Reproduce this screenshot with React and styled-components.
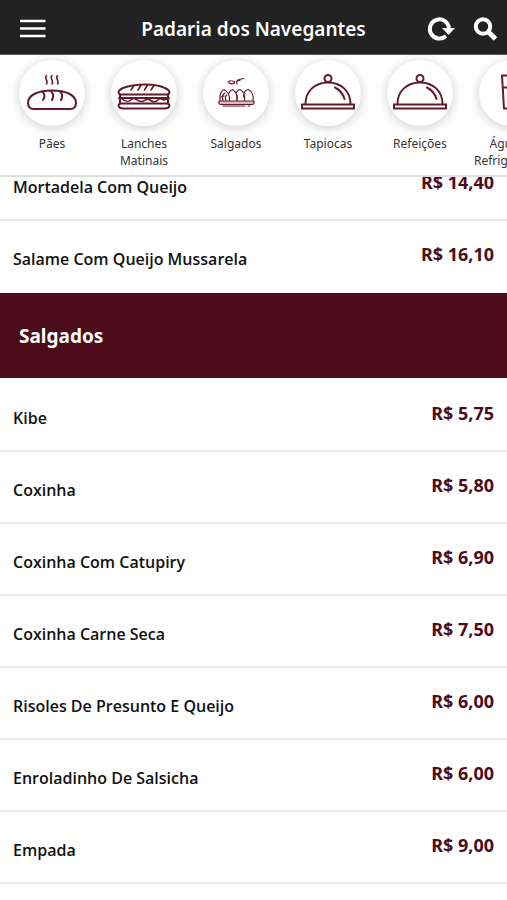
import React from "react";
import styled, { createGlobalStyle } from "styled-components";

const wine = "#4d0c19";

const GlobalStyle = createGlobalStyle`
  * { box-sizing: border-box; }
  html, body, #root { height: 100%; }
  body {
    margin: 0;
    background: #fff;
    color: #111;
    font-family: "Noto Sans", "Open Sans", sans-serif;
  }
`;

const Page = styled.div`
  height: 100%;
  display: flex;
  flex-direction: column;
  overflow: hidden;
`;

const TopBar = styled.header`
  flex: none;
  display: grid;
  grid-template-columns: 80px 1fr 80px;
  align-items: center;
  height: 55px;
  padding-top: 4px;
  background: #222;
  border-bottom: 1px solid #555;
`;

const Title = styled.h1`
  margin: 0;
  color: #fff;
  font-size: 19px;
  line-height: 28px;
  font-weight: 600;
  text-align: center;
  white-space: nowrap;
`;

const Actions = styled.div`
  display: flex;
  justify-content: flex-end;
  gap: 18px;
  padding-right: 9px;
`;

const IconButton = styled.button`
  display: flex;
  justify-self: start;
  margin: 0;
  margin-left: ${(p) => (p.$edge ? "20px" : "0")};
  padding: 0;
  border: 0;
  background: none;
  color: #fff;
  cursor: pointer;
`;

const Categories = styled.nav`
  flex: none;
  display: flex;
  height: 122px;
  padding: 5px 6px 0;
  overflow: hidden;
  border-bottom: 2px solid #ddd;
`;

const Category = styled.a`
  flex: none;
  display: flex;
  flex-direction: column;
  align-items: center;
  gap: 9px;
  width: 92px;
  color: #333;
  font-size: 12px;
  line-height: 17px;
  text-align: center;
  text-decoration: none;
`;

const Disc = styled.span`
  display: block;
  width: 66px;
  height: 66px;
  border-radius: 50%;
  background: #fff;
  box-shadow: 0 2px 12px rgba(0, 0, 0, 0.2);
`;

const Label = styled.span`
  width: 76px;
`;

const Menu = styled.main`
  flex: 1;
  min-height: 0;
  overflow: hidden;
`;

const Products = styled.ul`
  margin: 0;
  margin-top: ${(p) => (p.$scrolled ? "-28px" : "2px")};
  padding: 0;
  list-style: none;
`;

const Product = styled.li`
  display: flex;
  justify-content: space-between;
  height: 72px;
  padding: 0 13px;
  border-bottom: ${(p) => (p.$last ? "0" : "2px solid #e9e9e9")};
`;

const Name = styled.span`
  padding-top: 26px;
  font-size: 16px;
  line-height: 24px;
  font-weight: 600;
  font-family: "Open Sans", sans-serif;
`;

const Price = styled.span`
  padding-top: 21px;
  color: ${wine};
  font-size: 18px;
  line-height: 24px;
  font-weight: 700;
`;

const Section = styled.h2`
  margin: 0;
  padding: 29px 19px 28px;
  background: ${wine};
  color: #fff;
  font-size: 19px;
  line-height: 28px;
  font-weight: 700;
`;

const Drawing = ({ children, width = 2 }) => (
  <svg width="66" height="66" viewBox="0 0 66 66" fill="none" stroke="#641a2b"
    strokeWidth={width} strokeLinecap="round" strokeLinejoin="round" aria-hidden="true">
    {children}
  </svg>
);

const Bread = () => (
  <Drawing>
    <path d="M15 49C11 49 9 47 9 43C9 35 19 30.500 33 30.500S57 35 57 43C57 47 55 49 51 49Z" />
    <path d="M23.500 32C26 34 26 37 24 40M32 31C35 34 34.500 37 33 40M41 31.500C44 34 43.500 37 42 40" />
    <path strokeWidth="1.500" d="M27.500 15.500C24.500 18 30 21 27.500 24M33 15.500C30 18 35.500 21 33 24M38.500 15.500C35.500 18 41 21 38.500 24" />
  </Drawing>
);

const Sandwich = () => (
  <Drawing>
    <path d="M10 34.500C6 34 7 30 12 28C20 25 26 24.500 34 24.500S48 25 54 28C59 30 60 34 56 34.500Z" />
    <path d="M9 34.500V38M57 34.500V38M8 38H58M9 38V43M57 38V43M10 43.500H56C60 43.500 59 48.500 54 48.500H12C7 48.500 6 43.500 10 43.500Z" />
    <path strokeWidth="1.600" d="M10 38C15 43 18 42 21 39C24 36.500 26 42 31 41.500C35 41 35 37 39 40C43 43 45 42 48 39C51 37 52 43 57 38M20 30L23 25.500M27 30L30 25M33.500 30L36.500 25M40 30L43 25.500" />
  </Drawing>
);

const Snacks = () => (
  <Drawing width={1.2}>
    <path fill="#d9b9c0" d="M16 41H51V43C51 44 50 44.500 49 44.500H18C17 44.500 16 44 16 43Z" />
    <path d="M20 46H42M45 46H47" />
    <path d="M17 40.500C16 34 19 30 21 29.500C24 31 27 35 26.500 40.500M26 33C27 31 28 30 29.500 29.500C32 31 35 35 34 40.500M33 33C34 31 35.500 29.500 37 29.500C40 31 42.500 35 41.500 40.500M40.500 37C40.500 33 42.500 30 45 29.500C49 31 51 36 50 40.500" />
    <path d="M20 40.500C19 37 20 34 22 33M23 40.500C22 38 22 36 24 35M18 37L21 36M34 35V40" />
    <path d="M25 22L28 20.500M26 23C29 24.500 32 24 31.500 21.500L29.500 21M34 24C33 22 34 19.500 36 19.500L41 18.500M34 21L37 20.500" />
  </Drawing>
);

const Cloche = () => (
  <Drawing>
    <circle cx="33" cy="18.500" r="3.500" />
    <path d="M10.500 44C10.500 31 20 22.500 33 22.500S55.500 31 55.500 44M40 27.500C45 30 48 34 49.500 39" />
    <path strokeLinejoin="miter" d="M7 44.500H59V48.500H7Z" />
  </Drawing>
);

const Drinks = () => (
  <Drawing>
    <path d="M27 15.500H23L25 48.500H43L45 15.500H27M25 27.500H44" />
  </Drawing>
);

const BarsIcon = () => (
  <svg width="26" height="20" viewBox="0 0 26 20" stroke="currentColor" strokeWidth="2.500" aria-hidden="true">
    <path d="M0 2H25.500M0 9.500H25.500M0 17H25.500" />
  </svg>
);

const ReloadIcon = () => (
  <svg width="28" height="26" viewBox="0 0 28 26" fill="none" aria-hidden="true">
    <path d="M19 20A9.600 9.600 0 1 1 22 12" stroke="currentColor" strokeWidth="4" />
    <path d="M15 12H28L21.500 19Z" fill="currentColor" />
  </svg>
);

const SearchIcon = () => (
  <svg width="25" height="26" viewBox="0 0 25 26" fill="none" stroke="currentColor" aria-hidden="true">
    <circle cx="10" cy="10.500" r="7.200" strokeWidth="4" />
    <path d="M15 15.500L22.500 23" strokeWidth="5" />
  </svg>
);

const categories = [
  ["Pães", Bread],
  ["Lanches Matinais", Sandwich],
  ["Salgados", Snacks],
  ["Tapiocas", Cloche],
  ["Refeições", Cloche],
  ["Águas e Refrigerantes", Drinks],
];

const sandwiches = [
  ["Mortadela Com Queijo", "R$ 14,40"],
  ["Salame Com Queijo Mussarela", "R$ 16,10"],
];

const snacks = [
  ["Kibe", "R$ 5,75"],
  ["Coxinha", "R$ 5,80"],
  ["Coxinha Com Catupiry", "R$ 6,90"],
  ["Coxinha Carne Seca", "R$ 7,50"],
  ["Risoles De Presunto E Queijo", "R$ 6,00"],
  ["Enroladinho De Salsicha", "R$ 6,00"],
  ["Empada", "R$ 9,00"],
];

const ProductList = ({ items, scrolled, closed }) => (
  <Products $scrolled={scrolled}>
    {items.map(([name, price], i) => (
      <Product key={name} $last={closed && i === items.length - 1}>
        <Name>{name}</Name>
        <Price>{price}</Price>
      </Product>
    ))}
  </Products>
);

export default function App() {
  return (
    <Page>
      <GlobalStyle />
      <TopBar>
        <IconButton $edge type="button" aria-label="Menu"><BarsIcon /></IconButton>
        <Title>Padaria dos Navegantes</Title>
        <Actions>
          <IconButton type="button" aria-label="Atualizar"><ReloadIcon /></IconButton>
          <IconButton type="button" aria-label="Buscar"><SearchIcon /></IconButton>
        </Actions>
      </TopBar>
      <Categories aria-label="Categorias">
        {categories.map(([label, Icon]) => (
          <Category key={label} href="#salgados">
            <Disc><Icon /></Disc>
            <Label>{label}</Label>
          </Category>
        ))}
      </Categories>
      <Menu>
        <ProductList items={sandwiches} scrolled closed />
        <Section id="salgados">Salgados</Section>
        <ProductList items={snacks} />
      </Menu>
    </Page>
  );
}
